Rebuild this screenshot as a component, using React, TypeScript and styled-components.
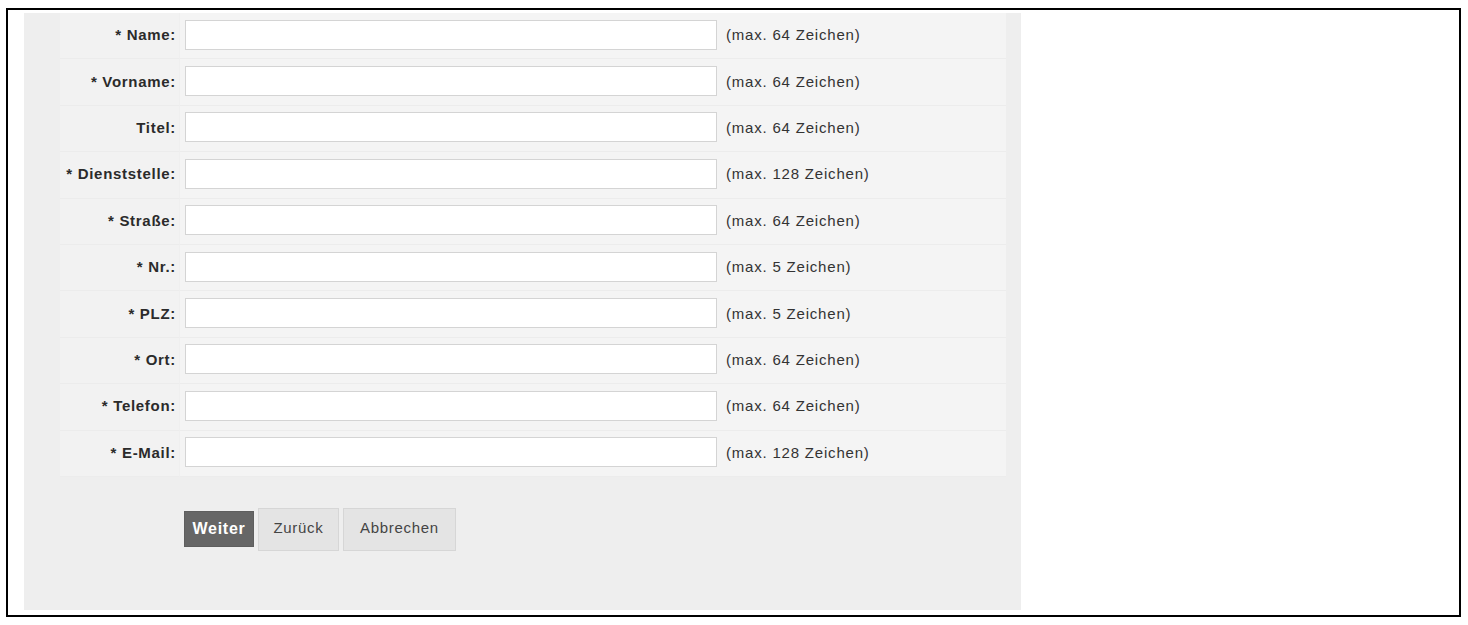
import React from "react";
import styled, { createGlobalStyle } from "styled-components";

const GlobalStyle = createGlobalStyle`
  html, body { margin: 0; padding: 0; background: #ffffff; }
  body { font-family: "Liberation Sans", Arial, sans-serif; }
  * { box-sizing: border-box; }
`;

const Frame = styled.div`
  margin: 8px 0 0 6px;
  width: 1455px;
  height: 609px;
  border: 2px solid #000000;
  padding: 3px 0 0 16px;
  background: #ffffff;
`;

const Panel = styled.div`
  width: 997px;
  height: 597px;
  background: #eeeeee;
  padding: 0 15px 0 36px;
  display: flex;
  flex-direction: column;
`;

const FormTable = styled.div`
  display: grid;
  grid-template-columns: 120px 1fr;
  grid-auto-rows: 46.4px;
  background: #f3f3f3;
`;

const LabelCell = styled.div`
  display: flex;
  align-items: center;
  justify-content: flex-end;
  padding-right: 3px;
  padding-bottom: 2px;
  background: #f2f2f2;
  border-bottom: 1px solid #ececec;
  border-right: 1px solid #efefef;
  font-size: 15px;
  letter-spacing: 0.7px;
  font-weight: bold;
  color: #2b2b2b;
  white-space: nowrap;
`;

const ValueCell = styled.div`
  display: flex;
  align-items: center;
  gap: 9px;
  padding-left: 5px;
  padding-bottom: 2px;
  background: #f4f4f4;
  border-bottom: 1px solid #ececec;
`;

const TextInput = styled.input`
  width: 532px;
  height: 30px;
  border: 1px solid #d4d4d4;
  background: #ffffff;
  margin: 0;
  padding: 2px 4px;
  font-family: "Liberation Sans", Arial, sans-serif;
  font-size: 14px;
`;

const Hint = styled.span`
  font-size: 15px;
  letter-spacing: 0.8px;
  color: #333333;
  white-space: nowrap;
`;

const ButtonRow = styled.div`
  display: flex;
  align-items: center;
  gap: 4px;
  margin-top: 31px;
  padding-left: 124px;
`;

const Button = styled.button<{ $primary?: boolean; $w: number }>`
  width: ${(p) => p.$w}px;
  height: ${(p) => (p.$primary ? 36 : 43)}px;
  margin: 0;
  padding: 0;
  font-family: "Liberation Sans", Arial, sans-serif;
  font-size: ${(p) => (p.$primary ? 16 : 15)}px;
  letter-spacing: 0.7px;
  font-weight: ${(p) => (p.$primary ? "bold" : "normal")};
  color: ${(p) => (p.$primary ? "#ffffff" : "#444444")};
  background: ${(p) => (p.$primary ? "#666666" : "#e4e4e4")};
  border: 1px solid ${(p) => (p.$primary ? "#5e5e5e" : "#d6d6d6")};
  padding-bottom: ${(p) => (p.$primary ? 0 : 4)}px;
  cursor: pointer;
`;

const fields: { label: string; hint: string }[] = [
  { label: "* Name:", hint: "(max. 64 Zeichen)" },
  { label: "* Vorname:", hint: "(max. 64 Zeichen)" },
  { label: "Titel:", hint: "(max. 64 Zeichen)" },
  { label: "* Dienststelle:", hint: "(max. 128 Zeichen)" },
  { label: "* Straße:", hint: "(max. 64 Zeichen)" },
  { label: "* Nr.:", hint: "(max. 5 Zeichen)" },
  { label: "* PLZ:", hint: "(max. 5 Zeichen)" },
  { label: "* Ort:", hint: "(max. 64 Zeichen)" },
  { label: "* Telefon:", hint: "(max. 64 Zeichen)" },
  { label: "* E-Mail:", hint: "(max. 128 Zeichen)" },
];

export default function App() {
  return (
    <>
      <GlobalStyle />
      <Frame>
        <Panel>
          <FormTable>
            {fields.map((f) => (
              <React.Fragment key={f.label}>
                <LabelCell>{f.label}</LabelCell>
                <ValueCell>
                  <TextInput type="text" />
                  <Hint>{f.hint}</Hint>
                </ValueCell>
              </React.Fragment>
            ))}
          </FormTable>
          <ButtonRow>
            <Button $primary $w={70}>Weiter</Button>
            <Button $w={81}>Zurück</Button>
            <Button $w={113}>Abbrechen</Button>
          </ButtonRow>
        </Panel>
      </Frame>
    </>
  );
}
